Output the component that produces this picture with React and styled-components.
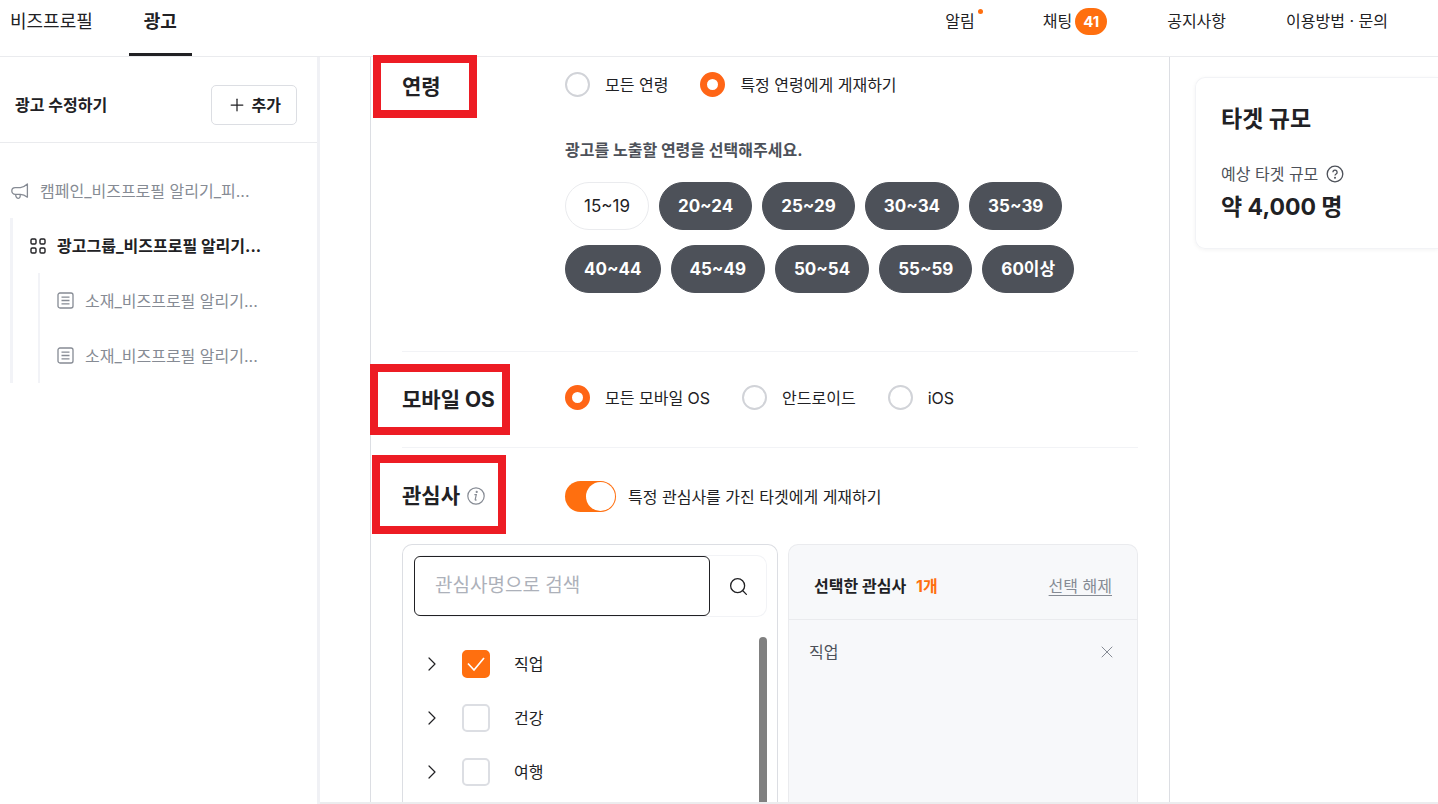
import React, { useState } from "react";
import styled, { createGlobalStyle, css } from "styled-components";
import { ChevronRight, Plus, Search, X } from "lucide-react";

const GlobalStyle = createGlobalStyle`
  * {
    box-sizing: border-box;
  }

  body {
    margin: 0;
    background: #fff;
    color: #212124;
    font-family: Inter, "Noto Sans CJK KR", sans-serif;
    font-size: 16px;
    line-height: 24px;
  }

  h1, h2, h3, p, ul {
    margin: 0;
    padding: 0;
  }

  ul {
    list-style: none;
  }

  a {
    color: inherit;
    text-decoration: none;
  }

  button, input {
    margin: 0;
    font: inherit;
    color: inherit;
  }
`;

const Page = styled.div`
  display: flex;
  flex-direction: column;
  height: 100vh;
  overflow: hidden;
`;

const Header = styled.header`
  display: flex;
  flex-shrink: 0;
  justify-content: space-between;
  height: 57px;
  padding: 0 50px 0 10px;
  border-bottom: 1px solid #eaebee;
`;

const Tabs = styled.nav`
  display: flex;
  gap: 36px;
`;

const Tab = styled.a`
  height: 56px;
  padding-top: 10px;
  font-size: 18px;

  ${({ $active }) =>
    $active &&
    css`
      padding: 10px 15px 0;
      border-bottom: 3px solid #212124;
      font-weight: 700;
    `}
`;

const Links = styled.nav`
  display: flex;
  align-items: center;
  gap: 60px;
  height: 42px;
`;

const HeaderLink = styled.a`
  position: relative;
  display: flex;
  align-items: center;
  gap: 3px;
  padding-right: ${({ $dot }) => ($dot ? "8px" : "0")};

  ${({ $dot }) =>
    $dot &&
    css`
      &::after {
        content: "";
        position: absolute;
        top: 0;
        right: 0;
        width: 5px;
        height: 5px;
        border-radius: 50%;
        background: #ff6f0f;
      }
    `}
`;

const Badge = styled.span`
  padding: 0 8px;
  border-radius: 14px;
  background: #ff6f0f;
  color: #fff;
  font-size: 15px;
  font-weight: 700;
  line-height: 27px;
`;

const Body = styled.div`
  display: flex;
  flex: 1;
  min-height: 0;
`;

const Sidebar = styled.aside`
  flex: 0 0 320px;
  border-right: 3px solid #f0f1f5;
`;

const SidebarHeader = styled.div`
  display: flex;
  align-items: center;
  justify-content: space-between;
  height: 86px;
  padding: 10px 20px 0 15px;
  border-bottom: 1px solid #eaebee;
`;

const SidebarTitle = styled.h2`
  font-size: 16px;
  font-weight: 700;
`;

const AddButton = styled.button`
  display: flex;
  align-items: center;
  gap: 5px;
  height: 40px;
  padding: 0 15px;
  border: 1px solid #dcdee3;
  border-radius: 5px;
  background: #fff;
  font-weight: 700;
`;

const Tree = styled.ul`
  padding-top: 20px;
`;

const Branch = styled.ul`
  margin-left: ${({ $depth }) => ($depth === 1 ? "10px" : "25px")};
  border-left: ${({ $depth }) => ($depth === 1 ? "3px" : "2px")} solid #f2f3f7;
`;

const TreeItem = styled.a`
  display: flex;
  align-items: center;
  gap: 11px;
  height: 55px;
  padding-left: ${({ $indent }) => $indent}px;
  color: ${({ $current }) => ($current ? "#212124" : "#868b94")};
  font-weight: ${({ $current }) => ($current ? 700 : 400)};
  white-space: nowrap;
`;

const Main = styled.main`
  display: flex;
  flex: 1;
  min-width: 0;
  padding-left: 50px;
  border-bottom: 2px solid #ececee;
`;

const Form = styled.form`
  display: flex;
  flex: 1;
  flex-direction: column;
  min-width: 0;
  padding: 0 31px;
  border: solid #dcdee3;
  border-width: 0 1px;
`;

const Section = styled.section`
  display: grid;
  grid-template-columns: 163px 1fr;
  flex-shrink: 0;
  padding: ${({ $pad }) => $pad};
  border-bottom: ${({ $last }) => ($last ? "0" : "1px solid #f2f3f6")};
`;

const SectionTitle = styled.h2`
  position: relative;
  display: flex;
  align-items: center;
  gap: 7px;
  height: 30px;
  font-size: 21px;
  font-weight: 700;
`;

const Highlight = styled.span`
  position: absolute;
  top: ${({ $top }) => $top}px;
  left: ${({ $left }) => $left}px;
  width: ${({ $width }) => $width}px;
  height: ${({ $height }) => $height}px;
  border: 8px solid #ed1c24;
  pointer-events: none;
`;

const RadioGroup = styled.div`
  display: flex;
  gap: 32px;
`;

const RadioLabel = styled.label`
  display: flex;
  align-items: center;
  gap: 15px;
  height: 25px;
`;

const Radio = styled.input`
  appearance: none;
  width: 25px;
  height: 25px;
  border: 2px solid #d1d3d8;
  border-radius: 50%;
  background: #fff;

  &:checked {
    border: 7px solid #ff6516;
  }
`;

const Hint = styled.p`
  margin: 41px 0 20px;
  color: #4d5159;
  font-weight: 700;
`;

const Chips = styled.div`
  display: flex;
  flex-wrap: wrap;
  gap: 15px 10px;
`;

const Chip = styled.button`
  height: 48px;
  padding: 0 18px;
  border: 1px solid ${({ $on }) => ($on ? "#4d5159" : "#eaebee")};
  border-radius: 24px;
  background: ${({ $on }) => ($on ? "#4d5159" : "#fff")};
  color: ${({ $on }) => ($on ? "#fff" : "#212124")};
  font-size: 17px;
  font-weight: ${({ $on }) => ($on ? 700 : 400)};
`;

const SwitchLabel = styled.label`
  display: flex;
  align-items: center;
  gap: 12px;
  height: 31px;
`;

const Switch = styled.input`
  appearance: none;
  display: flex;
  width: 51px;
  height: 31px;
  padding: 1px;
  border-radius: 16px;
  background: #d1d3d8;

  &::before {
    content: "";
    width: 29px;
    height: 29px;
    border-radius: 50%;
    background: #fff;
  }

  &:checked {
    justify-content: flex-end;
    background: #ff6f0f;
  }
`;

const Panels = styled.div`
  display: grid;
  grid-template-columns: minmax(0, 1fr) 350px;
  gap: 10px;
  flex: 1;
  min-height: 0;
`;

const Panel = styled.div`
  min-height: 0;
  overflow: hidden;
  border: 1px solid ${({ $tinted }) => ($tinted ? "#eaebee" : "#dcdee3")};
  border-bottom: 0;
  border-radius: 10px 10px 0 0;
  background: ${({ $tinted }) => ($tinted ? "#f7f8fa" : "#fff")};
`;

const PickerPanel = styled(Panel)`
  display: flex;
  flex-direction: column;
  padding: 10px 10px 0 11px;
`;

const SearchBox = styled.div`
  display: flex;
  flex-shrink: 0;
  height: 62px;
  border: 1px solid #f2f3f6;
  border-left: 0;
  border-radius: 10px;
`;

const SearchInput = styled.input`
  flex: 1;
  min-width: 0;
  padding: 0 20px;
  border: 1px solid #212124;
  border-radius: 6px;
  outline: 0;
  font-size: 19px;

  &::placeholder {
    color: #adb1ba;
  }
`;

const IconButton = styled.button`
  display: flex;
  align-items: center;
  justify-content: center;
  width: ${({ $width }) => $width}px;
  padding: 0;
  border: 0;
  background: none;
  color: ${({ $muted }) => ($muted ? "#868b94" : "#212124")};
`;

const PickerScroll = styled.div`
  display: flex;
  flex: 1;
  min-height: 0;
  margin-top: 20px;
`;

const PickerList = styled.ul`
  flex: 1;
`;

const PickerItem = styled.li`
  display: flex;
  align-items: center;
  height: 54px;
  padding-left: 6px;
`;

const CheckLabel = styled.label`
  display: flex;
  align-items: center;
  gap: 24px;
  margin-left: 18px;
`;

const Checkbox = styled.input`
  appearance: none;
  display: grid;
  place-items: center;
  width: 28px;
  height: 28px;
  border: 2px solid #dcdee3;
  border-radius: 5px;
  background: #fff;

  &:checked {
    border-color: #ff6f0f;
    background: #ff6f0f;
  }
`;

const CheckWrap = styled.span`
  display: grid;
  place-items: center;

  & > * {
    grid-area: 1 / 1;
  }

  & > svg {
    pointer-events: none;
  }
`;

const ScrollThumb = styled.div`
  width: 8px;
  border-radius: 4px 4px 0 0;
  background: #808080;
`;

const PanelHeader = styled.div`
  display: flex;
  align-items: center;
  justify-content: space-between;
  height: 75px;
  padding: 8px 25px 0;
  border-bottom: 1px solid #eaebee;
`;

const PanelTitle = styled.h3`
  display: flex;
  gap: 10px;
  font-size: 16px;
  font-weight: 700;
`;

const Count = styled.span`
  color: #ff6f0f;
`;

const ClearButton = styled.button`
  padding: 0;
  border: 0;
  background: none;
  color: #868b94;
  text-decoration: underline;
  text-underline-offset: 3px;
`;

const SelectedItem = styled.div`
  display: flex;
  justify-content: space-between;
  padding: 20px 20px;
  color: #4d5159;
`;

const Estimate = styled.aside`
  flex: 0 0 268px;
  padding: 20px 0 0 25px;
  overflow: hidden;
`;

const EstimateCard = styled.div`
  height: 172px;
  padding: 26px 25px 0;
  border: 1px solid #f2f3f6;
  border-right: 0;
  border-radius: 10px 0 0 10px;
  box-shadow: 0 1px 4px rgba(0, 0, 0, 0.05);
`;

const EstimateTitle = styled.h2`
  font-size: 23px;
  line-height: 30px;
`;

const EstimateLabel = styled.p`
  display: flex;
  align-items: center;
  gap: 8px;
  margin-top: 28px;
  color: #4d5159;
`;

const EstimateValue = styled.p`
  margin-top: 6px;
  font-size: 23px;
  font-weight: 700;
  line-height: 30px;
`;

function MegaphoneIcon() {
  return (
    <svg width="18" height="18" viewBox="0 0 18 18" fill="none" stroke="currentColor" strokeWidth="1.3" strokeLinejoin="round">
      <path d="M16.4 2v13.2c-2.2-1.7-4.4-2.7-7-2.8H4.2a3.3 3.3 0 0 1 0-6.8h5.2c2.6-.2 4.8-1.6 7-3.6Z" />
      <path d="M4.6 12.6c.3 2.2 1.3 3.8 2.8 3.8 1.4 0 2-1.6 1.8-3.8" />
    </svg>
  );
}

function GridIcon() {
  return (
    <svg width="16" height="16" viewBox="0 0 16 16" fill="none" stroke="currentColor" strokeWidth="1.4">
      <rect x="1" y="1" width="5" height="5" rx="1.2" />
      <rect x="10" y="1" width="5" height="5" rx="1.2" />
      <rect x="1" y="10" width="5" height="5" rx="1.2" />
      <rect x="10" y="10" width="5" height="5" rx="1.2" />
    </svg>
  );
}

function DocumentIcon() {
  return (
    <svg width="17" height="17" viewBox="0 0 17 17" fill="none" stroke="currentColor" strokeWidth="1.3">
      <rect x="1" y="1" width="15" height="15" rx="2" />
      <path d="M4.5 5.2h8M4.5 8.5h8M4.5 11.8h8" />
    </svg>
  );
}

function InfoIcon() {
  return (
    <svg width="18" height="18" viewBox="0 0 18 18" fill="none" stroke="#868b94" strokeWidth="1.2">
      <circle cx="9" cy="9" r="8.2" />
      <path d="M7.4 7.6h1.9L8.2 12.6c-.1.6.5.8 1.4.2" />
      <circle cx="9.7" cy="4.9" r="0.5" fill="#868b94" />
    </svg>
  );
}

function HelpIcon() {
  return (
    <svg width="18" height="18" viewBox="0 0 18 18" fill="none" stroke="#4d5159" strokeWidth="1.3">
      <circle cx="9" cy="9" r="7.8" />
      <path d="M6.9 7.2a2.1 2.1 0 1 1 3.2 1.8c-.8.5-1.1.8-1.1 1.6" />
      <circle cx="9" cy="12.8" r="0.4" fill="#4d5159" />
    </svg>
  );
}

function CheckIcon() {
  return (
    <svg width="20" height="20" viewBox="0 0 20 20" fill="none" stroke="#fff" strokeWidth="1.7">
      <path d="M2 9.5l6 6.5L18 4" />
    </svg>
  );
}

const AGES = ["15~19", "20~24", "25~29", "30~34", "35~39", "40~44", "45~49", "50~54", "55~59", "60이상"];
const INTERESTS = ["직업", "건강", "여행"];

function RadioOptions({ name, options, initial }) {
  const [value, setValue] = useState(initial);
  return (
    <RadioGroup>
      {options.map((option) => (
        <RadioLabel key={option}>
          <Radio type="radio" name={name} checked={value === option} onChange={() => setValue(option)} />
          {option}
        </RadioLabel>
      ))}
    </RadioGroup>
  );
}

export default function App() {
  const [ages, setAges] = useState(AGES.slice(1));
  const [interests, setInterests] = useState(["직업"]);

  const toggle = (list, setList, item) =>
    setList(list.includes(item) ? list.filter((i) => i !== item) : [...list, item]);

  return (
    <Page>
      <GlobalStyle />

      <Header>
        <Tabs>
          <Tab href="#profile">비즈프로필</Tab>
          <Tab href="#ads" $active>
            광고
          </Tab>
        </Tabs>
        <Links>
          <HeaderLink href="#alarm" $dot>
            알림
          </HeaderLink>
          <HeaderLink href="#chat">
            채팅 <Badge>41</Badge>
          </HeaderLink>
          <HeaderLink href="#notice">공지사항</HeaderLink>
          <HeaderLink href="#help">이용방법 · 문의</HeaderLink>
        </Links>
      </Header>

      <Body>
        <Sidebar>
          <SidebarHeader>
            <SidebarTitle>광고 수정하기</SidebarTitle>
            <AddButton type="button">
              <Plus size={20} strokeWidth={1.5} />
              추가
            </AddButton>
          </SidebarHeader>
          <Tree>
            <li>
              <TreeItem href="#campaign" $indent={11}>
                <MegaphoneIcon />
                캠페인_비즈프로필 알리기_피...
              </TreeItem>
              <Branch $depth={1}>
                <li>
                  <TreeItem href="#group" $indent={17} $current>
                    <GridIcon />
                    광고그룹_비즈프로필 알리기...
                  </TreeItem>
                  <Branch $depth={2}>
                    <li>
                      <TreeItem href="#creative-1" $indent={17}>
                        <DocumentIcon />
                        소재_비즈프로필 알리기...
                      </TreeItem>
                    </li>
                    <li>
                      <TreeItem href="#creative-2" $indent={17}>
                        <DocumentIcon />
                        소재_비즈프로필 알리기...
                      </TreeItem>
                    </li>
                  </Branch>
                </li>
              </Branch>
            </li>
          </Tree>
        </Sidebar>

        <Main>
          <Form>
            <Section $pad="15px 0 58px">
              <SectionTitle>
                연령
                <Highlight $top={-17} $left={-29} $width={104} $height={63} />
              </SectionTitle>
              <div>
                <RadioOptions
                  name="age"
                  options={["모든 연령", "특정 연령에게 게재하기"]}
                  initial="특정 연령에게 게재하기"
                />
                <Hint>광고를 노출할 연령을 선택해주세요.</Hint>
                <Chips>
                  {AGES.map((age) => (
                    <Chip
                      key={age}
                      type="button"
                      aria-pressed={ages.includes(age)}
                      $on={ages.includes(age)}
                      onClick={() => toggle(ages, setAges, age)}
                    >
                      {age}
                    </Chip>
                  ))}
                </Chips>
              </div>
            </Section>

            <Section $pad="33px 0 32px">
              <SectionTitle>
                모바일 OS
                <Highlight $top={-21} $left={-32} $width={140} $height={71} />
              </SectionTitle>
              <RadioOptions
                name="os"
                options={["모든 모바일 OS", "안드로이드", "iOS"]}
                initial="모든 모바일 OS"
              />
            </Section>

            <Section $pad="33px 0 32px" $last>
              <SectionTitle>
                관심사
                <InfoIcon />
                <Highlight $top={-26} $left={-30} $width={134} $height={79} />
              </SectionTitle>
              <SwitchLabel>
                <Switch type="checkbox" role="switch" defaultChecked />
                특정 관심사를 가진 타겟에게 게재하기
              </SwitchLabel>
            </Section>

            <Panels>
              <PickerPanel>
                <SearchBox>
                  <SearchInput type="text" placeholder="관심사명으로 검색" aria-label="관심사명으로 검색" />
                  <IconButton type="button" aria-label="검색" $width={56}>
                    <Search size={21} strokeWidth={1.5} />
                  </IconButton>
                </SearchBox>
                <PickerScroll>
                  <PickerList>
                    {INTERESTS.map((name) => (
                      <PickerItem key={name}>
                        <IconButton type="button" aria-label={`${name} 펼치기`} $width={24}>
                          <ChevronRight size={26} strokeWidth={1.2} />
                        </IconButton>
                        <CheckLabel>
                          <CheckWrap>
                            <Checkbox
                              type="checkbox"
                              checked={interests.includes(name)}
                              onChange={() => toggle(interests, setInterests, name)}
                            />
                            {interests.includes(name) && <CheckIcon />}
                          </CheckWrap>
                          {name}
                        </CheckLabel>
                      </PickerItem>
                    ))}
                  </PickerList>
                  <ScrollThumb />
                </PickerScroll>
              </PickerPanel>

              <Panel $tinted>
                <PanelHeader>
                  <PanelTitle>
                    선택한 관심사 <Count>{interests.length}개</Count>
                  </PanelTitle>
                  <ClearButton type="button" onClick={() => setInterests([])}>
                    선택 해제
                  </ClearButton>
                </PanelHeader>
                {interests.map((name) => (
                  <SelectedItem key={name}>
                    {name}
                    <IconButton
                      type="button"
                      aria-label={`${name} 삭제`}
                      $width={20}
                      $muted
                      onClick={() => toggle(interests, setInterests, name)}
                    >
                      <X size={24} strokeWidth={1.2} />
                    </IconButton>
                  </SelectedItem>
                ))}
              </Panel>
            </Panels>
          </Form>

          <Estimate>
            <EstimateCard>
              <EstimateTitle>타겟 규모</EstimateTitle>
              <EstimateLabel>
                예상 타겟 규모 <HelpIcon />
              </EstimateLabel>
              <EstimateValue>약 4,000 명</EstimateValue>
            </EstimateCard>
          </Estimate>
        </Main>
      </Body>
    </Page>
  );
}
